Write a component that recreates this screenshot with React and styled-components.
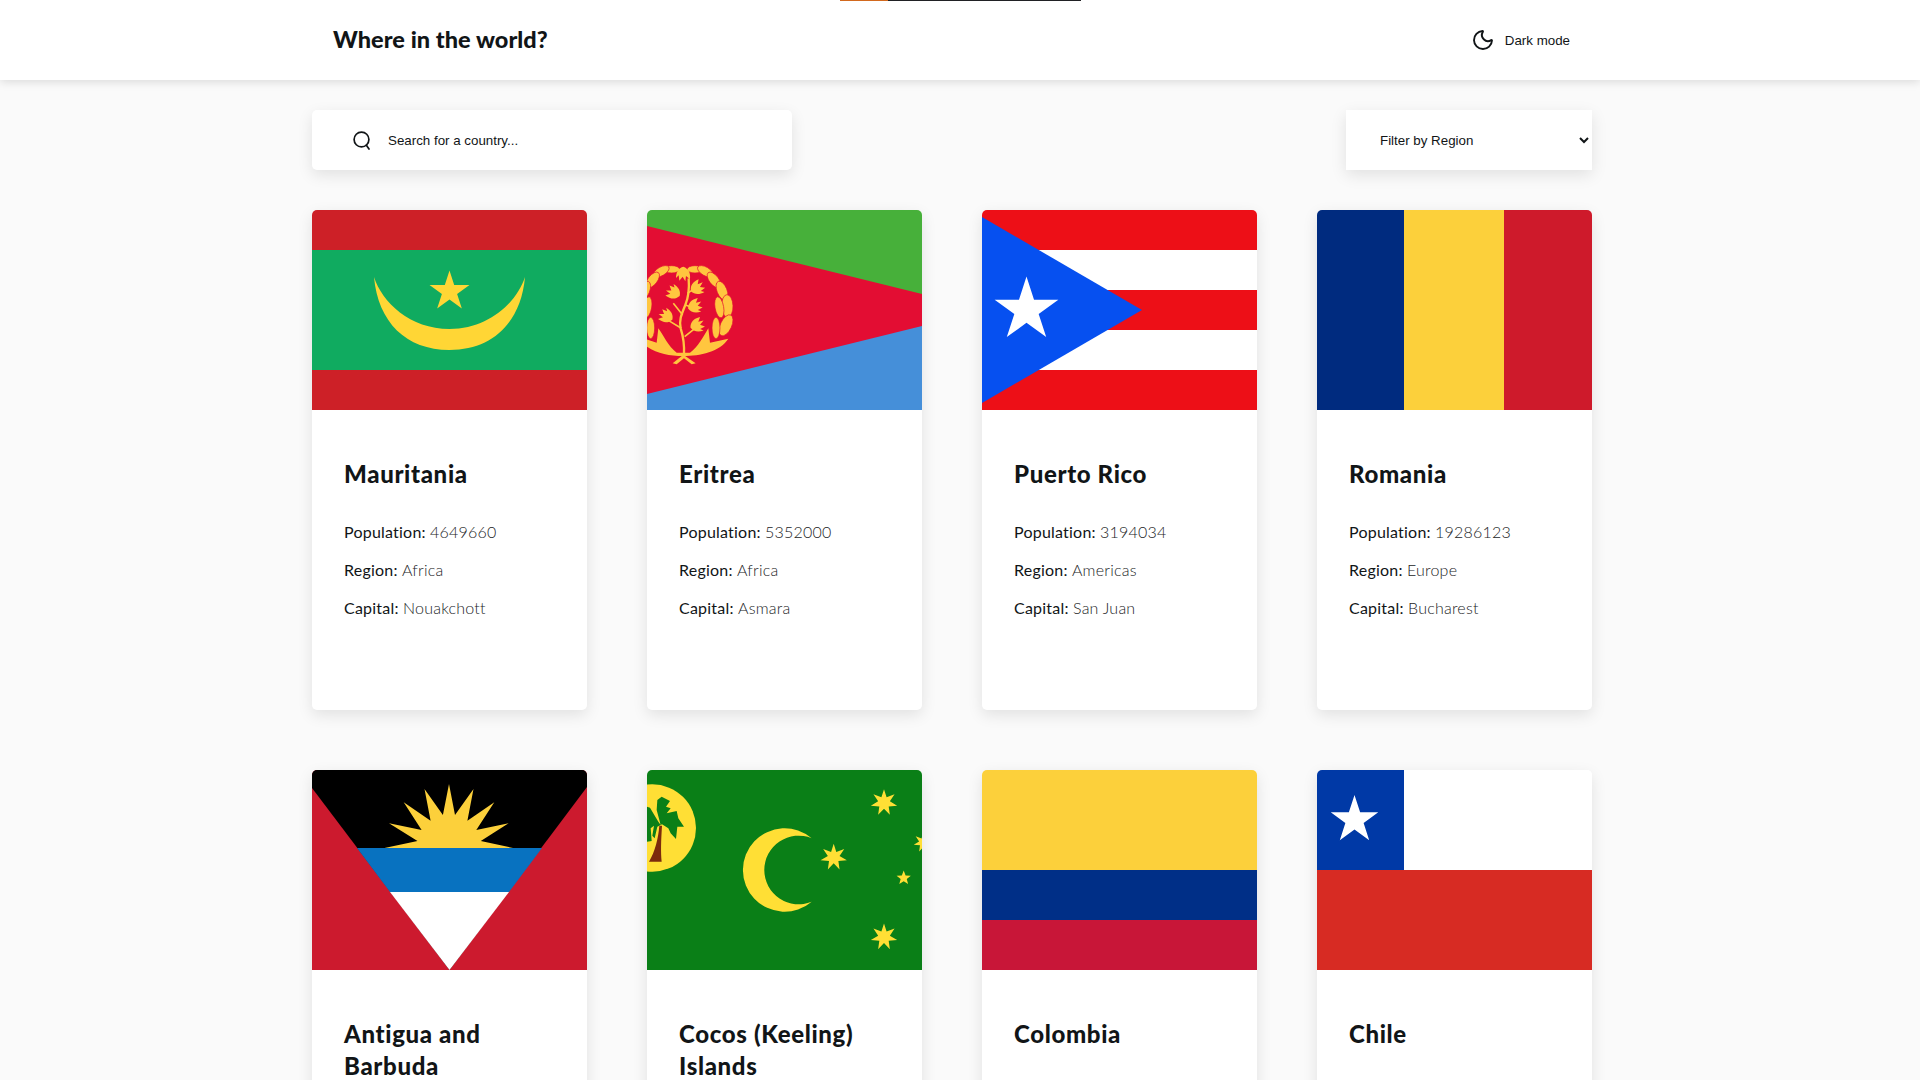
import React from 'react';
import styled, { createGlobalStyle } from 'styled-components';
import { Moon } from 'lucide-react';

const GlobalStyle = createGlobalStyle`
  html, body {
    margin: 0;
    height: 100%;
    overflow: hidden;
    background: #fafafa;
    color: #111517;
    font-family: "Lato", "Noto Sans", sans-serif;
  }
  * { box-sizing: border-box; }
`;

const Header = styled.header`
  position: relative;
  height: 80px;
  padding-right: 16px;
  background: #fff;
  box-shadow: 0 2px 9px rgba(0, 0, 0, 0.13);
`;

const TopLine = styled.div`
  position: absolute;
  top: 0;
  left: 840px;
  display: flex;
  width: 241px;
  height: 1px;
  background: #202124;

  &::before {
    content: '';
    width: 48px;
    background: #d2691e;
  }
`;

const HeaderInner = styled.div`
  width: 1280px;
  height: 100%;
  margin: 0 auto;
  padding: 0 22px 0 21px;
  display: flex;
  align-items: center;
  justify-content: space-between;
`;

const Logo = styled.h1`
  margin: 0 0 2px;
  font-size: 23.5px;
  font-weight: 900;
  letter-spacing: 0.05px;
  color: #111517;
`;

const ThemeButton = styled.button`
  display: flex;
  align-items: center;
  gap: 10px;
  padding: 0;
  border: 0;
  background: transparent;
  color: #111517;
  font-family: "Liberation Sans", sans-serif;
  font-size: 13.33px;
`;

const Main = styled.main`
  width: 1280px;
  margin-left: 312px;
  padding-top: 30px;
`;

const Controls = styled.div`
  display: flex;
  justify-content: space-between;
  margin-bottom: 40px;
`;

const SearchBox = styled.label`
  display: flex;
  align-items: center;
  gap: 16px;
  width: 480px;
  height: 60px;
  padding-left: 40px;
  background: #fff;
  border-radius: 5px;
  box-shadow: 0 5px 15px rgba(0, 0, 0, 0.1);
`;

const SearchInput = styled.input`
  flex: 1;
  border: 0;
  outline: 0;
  background: transparent;
  padding: 0;
  font-family: "Liberation Sans", sans-serif;
  font-size: 13.33px;

  &::placeholder {
    color: #111517;
    opacity: 1;
  }
`;

const RegionSelect = styled.select`
  width: 246px;
  height: 60px;
  padding-left: 30px;
  border: 0;
  outline: 0;
  background: #fff;
  color: #111517;
  font-family: "Liberation Sans", sans-serif;
  font-size: 13.33px;
  box-shadow: 0 5px 15px rgba(0, 0, 0, 0.1);
`;

const Grid = styled.div`
  display: grid;
  grid-template-columns: repeat(4, 275px);
  gap: 60px;
`;

const Card = styled.article`
  height: 500px;
  background: #fff;
  border-radius: 5px;
  overflow: hidden;
  box-shadow: 0 5px 15px rgba(0, 0, 0, 0.1);
`;

const FlagSvg = styled.svg`
  display: block;
  width: 275px;
  height: 200px;
`;

const CardBody = styled.div`
  padding: 48px 32px;
`;

const CountryName = styled.h2`
  margin: 0 0 31px;
  font-size: 24px;
  line-height: 32px;
  font-weight: 900;
  letter-spacing: 0.65px;
  color: #111517;
`;

const Fact = styled.p`
  margin: 0 0 16px;
  font-size: 16px;
  line-height: 22px;
  font-weight: 400;
  letter-spacing: 0.22px;
  color: #111517;
`;

const FactValue = styled.span`
  font-weight: 300;
  color: #222426;
`;

const star = (cx, cy, R, r, n = 5) =>
  Array.from({ length: n * 2 }, (_, i) => {
    const a = -Math.PI / 2 + (i * Math.PI) / n;
    const d = i % 2 ? r : R;
    return `${(cx + d * Math.cos(a)).toFixed(2)},${(cy + d * Math.sin(a)).toFixed(2)}`;
  }).join(' ');

const Flag = ({ children }) => (
  <FlagSvg viewBox="0 0 275 200" preserveAspectRatio="none">
    {children}
  </FlagSvg>
);

const Mauritania = () => (
  <Flag>
    <rect width="275" height="200" fill="#cd2027" />
    <rect y="40" width="275" height="120" fill="#10ab60" />
    <path
      d="M62 67C66 112 94 140 137.5 140C181 140 209 112 213 67C205 92 177 119 137.5 119C98 119 70 92 62 67Z"
      fill="#ffd635"
    />
    <polygon points={star(137.5, 81.5, 21, 8)} fill="#ffd635" />
  </Flag>
);

// leaf: x, y, rotation, half length, half width (in the zoomed emblem's units)
const wreathLeaves = [
  [165, 208, 0, 24, 11],
  [196, 214, 30, 26, 13],
  [222, 240, 52, 28, 14],
  [246, 272, 68, 30, 15],
  [262, 318, 88, 34, 17],
  [238, 322, 80, 32, 13],
  [258, 376, 115, 34, 17],
  [228, 384, 90, 32, 12],
];

const sprigs = [
  [130, 222, 180],
  [172, 263, 60],
  [100, 277, -60],
  [165, 318, 70],
  [78, 348, -60],
  [172, 375, 70],
];

const WreathHalf = () => (
  <>
    {wreathLeaves.map(([x, y, rot, rx, ry]) => (
      <ellipse
        key={`${x}-${y}`}
        cx={x}
        cy={y}
        rx={rx}
        ry={ry}
        transform={`rotate(${rot} ${x} ${y})`}
        fill="#ffc63f"
        stroke="#e30d33"
        strokeWidth="2"
      />
    ))}
  </>
);

const Eritrea = () => (
  <Flag>
    <rect width="275" height="200" fill="#47b03a" />
    <rect y="100" width="275" height="100" fill="#458fd9" />
    <polygon points="0,16 275,84 275,116 0,184" fill="#e30d33" />
    <g transform="translate(-7 -10) scale(.3333)" fill="#ffc63f">
      <WreathHalf />
      <g transform="translate(260 0) scale(-1 1)">
        <WreathHalf />
      </g>
      <path d="M130 468C80 468 40 458 0 425L20 418L50 428L55 385C70 405 85 440 110 458L150 458C175 440 190 410 205 385L210 428L265 416C240 455 180 468 130 468Z" />
      <path d="M98 490L130 464L167 490L155 493L132 475L110 493Z" />
      <path
        d="M132 466C134 430 130 410 122 385C116 360 126 340 136 315C146 290 148 260 146 235"
        fill="none"
        stroke="#ffc63f"
        strokeWidth="7"
      />
      <path d="M124 385L86 362M134 410L165 385M136 315L164 325M128 345L100 310M142 280L165 265" fill="none" stroke="#ffc63f" strokeWidth="5" />
      {sprigs.map(([x, y, rot]) => (
        <path
          key={`${x}-${y}`}
          transform={`translate(${x} ${y}) rotate(${rot})`}
          d="M0 22C-16 16 -22 4 -20 -16L-8 -6L-6 -22L2 -8L12 -20L14 -4L22 -12C22 6 14 18 0 22Z"
        />
      ))}
    </g>
  </Flag>
);

const PuertoRico = () => (
  <Flag>
    <rect width="275" height="200" fill="#ed0f17" />
    <rect y="40" width="275" height="40" fill="#fff" />
    <rect y="120" width="275" height="40" fill="#fff" />
    <polygon points="0,7 160,100 0,193" fill="#0650f0" />
    <polygon points={star(44.5, 100, 33.5, 12.8)} fill="#fff" />
  </Flag>
);

const Romania = () => (
  <Flag>
    <rect width="87" height="200" fill="#002b7f" />
    <rect x="87" width="100" height="200" fill="#fcd03b" />
    <rect x="187" width="88" height="200" fill="#ce1a2b" />
  </Flag>
);

const Antigua = () => (
  <Flag>
    <rect width="275" height="200" fill="#cc1a2e" />
    <polygon points="0,18 0,0 275,0 275,17 137.5,200" fill="#000" />
    <polygon points="45,78 230,78 197,122 78,122" fill="#0872c0" />
    <polygon points="78,122 197,122 137.5,200" fill="#fff" />
    <polygon
      points="72.5,78 105.5,71 77,53.3 109.6,60 91.7,32.3 118.6,50.7 112.5,19 130.9,45 137,14 143,45 161.5,19 155.4,50.7 182.3,32.3 164.3,60 196.6,53.3 168.8,71 201,78"
      fill="#fcd03b"
    />
  </Flag>
);

const Cocos = () => (
  <Flag>
    <rect width="275" height="200" fill="#0a7f17" />
    <circle cx="5.3" cy="58" r="43.7" fill="#ffdf35" />
    <g transform="translate(-7 -5) scale(.3333)">
      <path d="M58 182L66 182C63 230 62 260 65 290L27 290C45 260 55 220 58 182Z" fill="#7c2a0c" />
      <path
        fill="#0a7f17"
        d="M62 180L50 135L52 105L65 95L90 108L78 125L92 130L80 145L110 138L115 160L132 185L112 185L108 222L92 205L85 190L66 178L52 185L44 220L37 212L42 182L32 190L35 228L21 230L21 125L30 128L55 170Z"
      />
    </g>
    <path
      d="M164.7 68.3A41.7 41.7 0 1 0 164.7 131.7A34.3 34.3 0 1 1 164.7 68.3Z"
      fill="#ffdf35"
    />
    <polygon points={star(186.7, 87.3, 13.5, 6, 7)} fill="#ffdf35" />
    <polygon points={star(237, 32.7, 13.5, 6, 7)} fill="#ffdf35" />
    <polygon points={star(237, 167, 13.5, 6, 7)} fill="#ffdf35" />
    <polygon points={star(276.5, 72.5, 10, 4.5, 7)} fill="#ffdf35" />
    <polygon points={star(256.7, 108, 7.5, 3.2)} fill="#ffdf35" />
  </Flag>
);

const Colombia = () => (
  <Flag>
    <rect width="275" height="100" fill="#fcd03b" />
    <rect y="100" width="275" height="50" fill="#002f87" />
    <rect y="150" width="275" height="50" fill="#c81638" />
  </Flag>
);

const Chile = () => (
  <Flag>
    <rect width="275" height="100" fill="#fff" />
    <rect y="100" width="275" height="100" fill="#d72b23" />
    <rect width="87" height="100" fill="#0039a6" />
    <polygon points={star(37.5, 50, 25, 9.6)} fill="#fff" />
  </Flag>
);

const countries = [
  { name: 'Mauritania', population: 4649660, region: 'Africa', capital: 'Nouakchott', flag: Mauritania },
  { name: 'Eritrea', population: 5352000, region: 'Africa', capital: 'Asmara', flag: Eritrea },
  { name: 'Puerto Rico', population: 3194034, region: 'Americas', capital: 'San Juan', flag: PuertoRico },
  { name: 'Romania', population: 19286123, region: 'Europe', capital: 'Bucharest', flag: Romania },
  { name: 'Antigua and Barbuda', population: 97929, region: 'Americas', capital: "Saint John's", flag: Antigua },
  { name: 'Cocos (Keeling) Islands', population: 544, region: 'Oceania', capital: 'West Island', flag: Cocos },
  { name: 'Colombia', population: 50882884, region: 'Americas', capital: 'Bogotá', flag: Colombia },
  { name: 'Chile', population: 19116209, region: 'Americas', capital: 'Santiago', flag: Chile },
];

const SearchIcon = () => (
  <svg width="20" height="19" viewBox="0 0 20 19" fill="none" stroke="#111517" strokeWidth="1.7">
    <circle cx="9.5" cy="8.5" r="7.4" />
    <path d="M14.4 14.2L17 18" strokeLinecap="round" />
  </svg>
);

const App = () => {
  return (
    <>
      <GlobalStyle />
      <Header>
        <TopLine />
        <HeaderInner>
          <Logo>Where in the world?</Logo>
          <ThemeButton>
            <Moon size={24} strokeWidth={1.9} />
            Dark mode
          </ThemeButton>
        </HeaderInner>
      </Header>
      <Main>
        <Controls>
          <SearchBox>
            <SearchIcon />
            <SearchInput placeholder="Search for a country..." />
          </SearchBox>
          <RegionSelect defaultValue="">
            <option value="">Filter by Region</option>
            <option>Africa</option>
            <option>Americas</option>
            <option>Asia</option>
            <option>Europe</option>
            <option>Oceania</option>
          </RegionSelect>
        </Controls>
        <Grid>
          {countries.map((c) => (
            <Card key={c.name}>
              <c.flag />
              <CardBody>
                <CountryName>{c.name}</CountryName>
                <Fact>Population: <FactValue>{c.population}</FactValue></Fact>
                <Fact>Region: <FactValue>{c.region}</FactValue></Fact>
                <Fact>Capital: <FactValue>{c.capital}</FactValue></Fact>
              </CardBody>
            </Card>
          ))}
        </Grid>
      </Main>
    </>
  );
};

export default App;
